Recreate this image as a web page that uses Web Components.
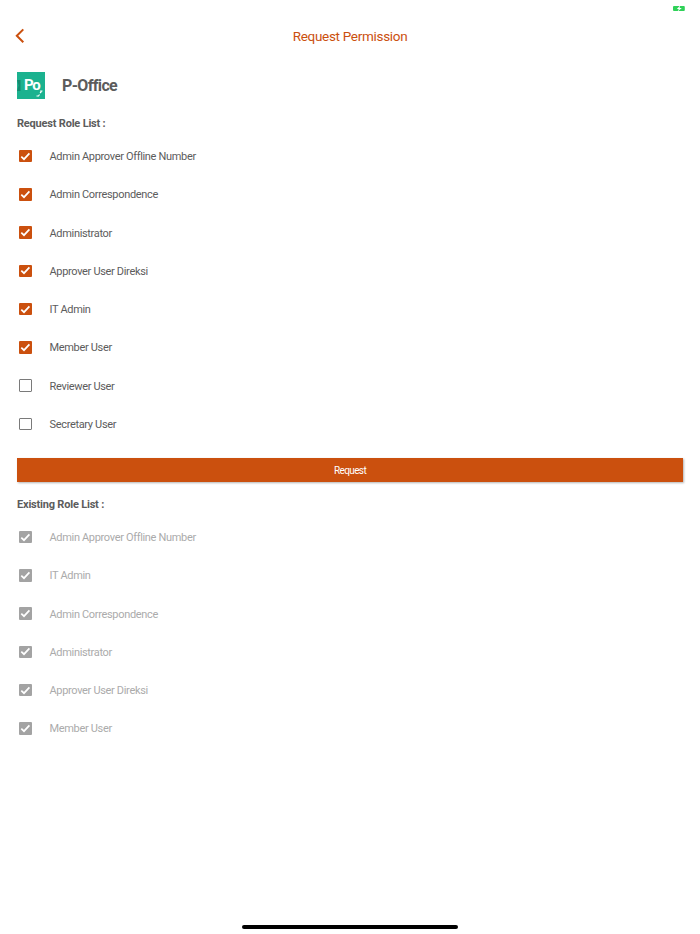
<!DOCTYPE html>
<html>
<head>
<meta charset="utf-8">
<title>Request Permission</title>
<style>
  html, body { margin: 0; background: #fff; }
  body { width: 700px; height: 934px; overflow: hidden; position: relative; font-family: Roboto, "Open Sans", sans-serif; }
</style>
</head>
<body>
<status-battery></status-battery>
<nav-header>Request Permission</nav-header>
<app-brand>P-Office</app-brand>
<section-title>Request Role List :</section-title>
<role-list>
  <role-item checked>Admin Approver Offline Number</role-item>
  <role-item checked>Admin Correspondence</role-item>
  <role-item checked>Administrator</role-item>
  <role-item checked>Approver User Direksi</role-item>
  <role-item checked>IT Admin</role-item>
  <role-item checked>Member User</role-item>
  <role-item>Reviewer User</role-item>
  <role-item>Secretary User</role-item>
</role-list>
<request-button>Request</request-button>
<section-title>Existing Role List :</section-title>
<role-list>
  <role-item checked disabled>Admin Approver Offline Number</role-item>
  <role-item checked disabled>IT Admin</role-item>
  <role-item checked disabled>Admin Correspondence</role-item>
  <role-item checked disabled>Administrator</role-item>
  <role-item checked disabled>Approver User Direksi</role-item>
  <role-item checked disabled>Member User</role-item>
</role-list>
<home-bar></home-bar>

<script>
  class StatusBattery extends HTMLElement {
    connectedCallback() {
      this.attachShadow({ mode: 'open' });
      this.shadowRoot.innerHTML = `
        <style>
          :host { position: absolute; top: 6px; left: 673px; display: block; width: 12px; height: 5px; }
          svg { display: block; overflow: visible; }
        </style>
        <svg width="12" height="5" viewBox="0 0 12 5">
          <rect x="0" y="0" width="11.8" height="5" rx="1" fill="#2fd158"/>
          <path d="M7.2 -0.4 L3.8 3 H5.8 L4.6 5.4 L8.8 2 H6.6 Z" fill="#fff"/>
        </svg>
      `;
    }
  }
  customElements.define('status-battery', StatusBattery);

  class NavHeader extends HTMLElement {
    connectedCallback() {
      this.attachShadow({ mode: 'open' });
      this.shadowRoot.innerHTML = `
        <style>
          :host { display: block; height: 72px; }
          .bar { position: relative; display: flex; justify-content: center; padding-top: 27px; }
          .title { font-size: 13.5px; line-height: 18px; color: #cb500e; letter-spacing: -0.3px; }
          .back { position: absolute; left: 15px; top: 28px; }
          svg { display: block; }
        </style>
        <div class="bar">
          <svg class="back" width="10" height="16" viewBox="0 0 10 16">
            <path d="M8.3 1.4 L1.8 7.8 L8.3 14.3" fill="none" stroke="#cb500e" stroke-width="2"/>
          </svg>
          <span class="title"><slot></slot></span>
        </div>
      `;
    }
  }
  customElements.define('nav-header', NavHeader);

  class AppBrand extends HTMLElement {
    connectedCallback() {
      this.attachShadow({ mode: 'open' });
      this.shadowRoot.innerHTML = `
        <style>
          :host { display: flex; align-items: center; gap: 17px; height: 27px; padding-left: 17px; margin-bottom: 2px; }
          .logo { position: relative; width: 28px; height: 27px; background: #1bb28f; overflow: hidden; }
          .logo b { position: absolute; left: 7px; top: 0; font-size: 15px; font-weight: 700; line-height: 26px; color: #fff; letter-spacing: -1.2px; }
          .logo svg { position: absolute; left: 0; top: 0; }
          .name { font-size: 16px; font-weight: 700; color: #5c5c5c; letter-spacing: -0.65px; }
        </style>
        <div class="logo">
          <svg width="28" height="27" viewBox="0 0 28 27">
            <path d="M0 8 H3.5 V19 H0 L1.6 13.5 Z" fill="#158a70"/>
            <path d="M19.5 24 H21.5 L22.5 22.5 M23 21 L24.5 19.5 M23.2 19 H25.5" fill="none" stroke="#fff" stroke-width="1.1"/>
          </svg>
          <b>Po</b>
        </div>
        <span class="name"><slot></slot></span>
      `;
    }
  }
  customElements.define('app-brand', AppBrand);

  class SectionTitle extends HTMLElement {
    connectedCallback() {
      this.attachShadow({ mode: 'open' });
      this.shadowRoot.innerHTML = `
        <style>
          :host { display: block; padding: 15px 17px 0; height: 21px; font-size: 11px; line-height: 15px; font-weight: 700; color: #5c5c5c; letter-spacing: -0.2px; }
        </style>
        <slot></slot>
      `;
    }
  }
  customElements.define('section-title', SectionTitle);

  class RoleList extends HTMLElement {
    connectedCallback() {
      this.attachShadow({ mode: 'open' });
      this.shadowRoot.innerHTML = `
        <style>
          :host { display: block; }
        </style>
        <slot></slot>
      `;
    }
  }
  customElements.define('role-list', RoleList);

  class RoleItem extends HTMLElement {
    connectedCallback() {
      this.attachShadow({ mode: 'open' });
      const checked = this.hasAttribute('checked');
      const disabled = this.hasAttribute('disabled');
      const box = checked
        ? `<div class="box on"><svg width="13" height="13" viewBox="0 0 13 13"><path d="M2.3 6.6 L5 9.2 L10.4 3.4" fill="none" stroke="#fff" stroke-width="1.7"/></svg></div>`
        : `<div class="box"></div>`;
      this.shadowRoot.innerHTML = `
        <style>
          :host { display: flex; align-items: center; gap: 18px; height: 38.25px; padding-left: 19px; font-size: 11px; color: ${disabled ? '#ababab' : '#5c5c5c'}; letter-spacing: -0.33px; }
          .box { box-sizing: border-box; width: 12.5px; height: 12.5px; border: 1.5px solid #7a7a7a; border-radius: 1px; display: flex; align-items: center; justify-content: center; }
          .box.on { background: ${disabled ? '#a3a3a3' : '#cb500e'}; border: 0; }
          .label { padding-top: 1px; }
          svg { display: block; flex: none; }
        </style>
        ${box}
        <span class="label"><slot></slot></span>
      `;
    }
  }
  customElements.define('role-item', RoleItem);

  class RequestButton extends HTMLElement {
    connectedCallback() {
      this.attachShadow({ mode: 'open' });
      this.shadowRoot.innerHTML = `
        <style>
          :host { display: block; padding: 15px 17px 0; }
          button { display: block; width: 100%; height: 24px; padding: 0; border: 0; background: #cb500e; color: #fff; font: 10px Roboto, sans-serif; letter-spacing: -0.6px; box-shadow: 1px 1px 2px rgba(0,0,0,0.3); }
        </style>
        <button><slot></slot></button>
      `;
    }
  }
  customElements.define('request-button', RequestButton);

  class HomeBar extends HTMLElement {
    connectedCallback() {
      this.attachShadow({ mode: 'open' });
      this.shadowRoot.innerHTML = `
        <style>
          :host { position: absolute; left: 242px; top: 925px; display: block; width: 216px; height: 4px; border-radius: 2px; background: #000; }
        </style>
      `;
    }
  }
  customElements.define('home-bar', HomeBar);
</script>
</body>
</html>
